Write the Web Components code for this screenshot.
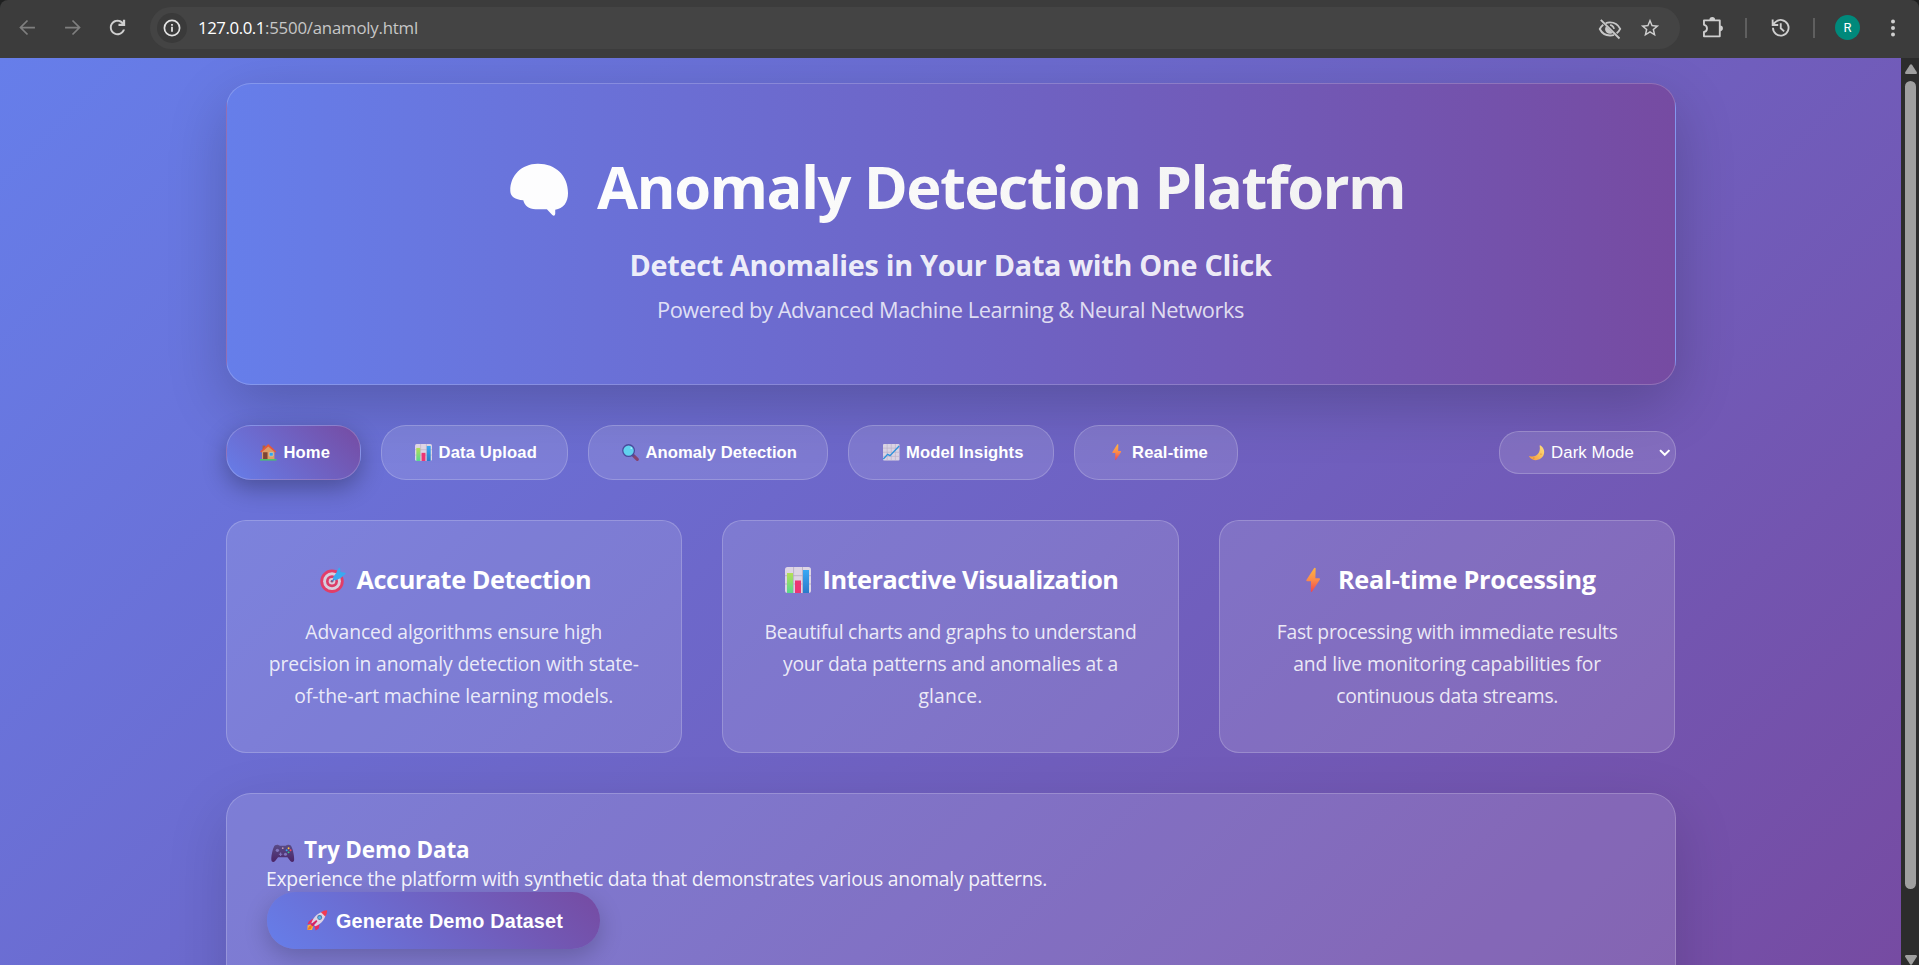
<!DOCTYPE html>
<html lang="en">
<head>
<meta charset="utf-8">
<title>Anomaly Detection Platform</title>
<style>
html,body{margin:0;height:100%;overflow:hidden;background:#1f2020}
body{font-family:"Open Sans","Noto Sans",sans-serif;color:#fff}
</style>
</head>
<body>
<app-window></app-window>
<script>
const ICONS = {
  brain:`<svg viewBox="0 0 60 54"><path fill="#fdfdfe" d="M0.3 28C0 12 12 .5 28 .3C46 0 59 12 59 30C59 40 54 46 46 47V51.500Q45.500 54 43 52.500L37.500 46.700H26C19 46.500 15 43 13.500 37.500C5 36.500 .5 34 .3 28Z"/></svg>`,
  home:`<svg viewBox="0 0 16 16"><path fill="#b5603a" d="M2.500 1.500h2.600v5H2.500z"/><path fill="#dd9d66" d="M2 7l6-5.200L14 7v8H2z"/><path fill="#e8573a" d="M8 0l7.800 7.200-1 1.100L8 2.400 1.200 8.300.2 7.200z"/><path fill="#7c4534" d="M3 8h4.300v7H3z"/><path fill="#2da6ef" stroke="#f3d6b8" stroke-width=".5" d="M9 8.200h3.800v3.500H9z"/><path fill="#45cf62" d="M0 14.700h16V16H0z"/></svg>`,
  chart:`<svg viewBox="0 0 26 26"><defs><linearGradient id="g" x2="0" y2="1"><stop stop-color="#b5df55"/><stop offset="1" stop-color="#56d891"/></linearGradient><linearGradient id="b" x2="0" y2="1"><stop stop-color="#39a9f5"/><stop offset="1" stop-color="#2b79c9"/></linearGradient></defs><rect width="26" height="26" rx="2.500" fill="#ddd5e4"/><path stroke="#b4a9c2" stroke-width=".8" d="M0 8.700h26M0 17h26M8.600 0v26M17.500 0v26"/><path fill="url(#g)" d="M2 6h6v20H2z"/><path fill="#ec3574" d="M10 13.500h6V26h-6z"/><path fill="url(#b)" d="M18 3h6v23h-6z"/></svg>`,
  search:`<svg viewBox="0 0 16 16"><path stroke="#86436f" stroke-width="3" stroke-linecap="round" d="M10.800 11l3.600 3.500"/><path stroke="#554a92" stroke-width="2" d="M9.500 9.700l1.800 1.800"/><circle cx="6.200" cy="6.200" r="5.500" fill="#61d2ee" stroke="#4a4a9c" stroke-width="1.200"/><circle cx="8.700" cy="3.800" r=".8" fill="#b4f0ff"/></svg>`,
  trend:`<svg viewBox="0 0 16 16"><rect width="16" height="16" rx="1" fill="#dad3e3"/><path stroke="#b9afc6" stroke-width=".6" d="M0 4h16M0 8h16M0 12h16M4 0v16M8 0v16M12 0v16"/><path fill="none" stroke="#2d92dc" stroke-width="1.300" d="M.3 14.500L4.500 10l2.300 1.300L15.700 2"/></svg>`,
  bolt:`<svg viewBox="0 0 15 26"><defs><linearGradient id="o" x2="0" y2="1"><stop stop-color="#ffb63e"/><stop offset=".5" stop-color="#fc8b4a"/><stop offset="1" stop-color="#f0434f"/></linearGradient></defs><path fill="url(#o)" d="M8.500.5L.4 13Q0 14.300 1.300 14.300H5.200L5 25Q5.500 26 6.300 25L14.400 12.500Q14.800 11.200 13.500 11.200H9.700L10 .8Q9.300-.2 8.500.5z"/></svg>`,
  moon:`<svg viewBox="0 0 16 16"><defs><linearGradient id="m" x1="1" x2="0" y2="1"><stop stop-color="#ffe27c"/><stop offset="1" stop-color="#f5983c"/></linearGradient></defs><path fill="url(#m)" d="M11.800.4C16 3 17 8.500 13.800 12.500 10.300 16.800 3.500 16.700.2 12.200Q0 11.200 1.100 11.500C7.500 13 12.300 8 11 1 10.900.3 11.300.1 11.800.4z"/><circle cx="5" cy="13.500" r=".8" fill="#e68a3a"/><circle cx="12.300" cy="9.500" r=".9" fill="#eda847"/></svg>`,
  target:`<svg viewBox="0 0 26 26"><circle cx="12" cy="14.200" r="11.700" fill="#e23d68"/><circle cx="12" cy="14.200" r="8.900" fill="#d8cede"/><circle cx="12" cy="14.200" r="6" fill="#dd3c68"/><circle cx="12" cy="14.200" r="3.300" fill="#d8cede"/><circle cx="12" cy="14.200" r="1.300" fill="#a24b76"/><path stroke="#3c88c9" stroke-width="1.300" d="M12 14.200L21 5"/><path fill="#39aaf0" d="M12.700 10.800L16 6.200 18.800.8Q20 .2 20.200 1.800L20.500 5 25.300 5.700Q26.300 6.400 25.200 7.300L20.500 11.300 15 13.600z"/></svg>`,
  pad:`<svg viewBox="0 0 24 19"><defs><linearGradient id="p" x2="0" y2="1"><stop stop-color="#584a86"/><stop offset="1" stop-color="#4b2467"/></linearGradient></defs><path fill="#6b355f" d="M4.500 1.500Q6-.2 9 1.500zM15 1.500Q18-.2 19.500 1.500z"/><path fill="url(#p)" d="M4 1.300Q7 .8 9 1.700H15Q17.500.8 20 1.300C22 3 24 12 23.700 16.500 23.400 19 21.200 19 19.800 17.500L16.800 13.700H7.200L4.200 17.500C2.800 19 .6 19 .3 16.500 0 12 2 3 4 1.300z"/><circle cx="6.500" cy="6.500" r="1.700" fill="#8275bd"/><circle cx="14.800" cy="10.500" r="1.600" fill="#8275bd"/><path stroke="#8275bd" stroke-width="1.100" d="M8 10.500h3.600M9.800 8.700v3.600"/><circle cx="12" cy="4.300" r=".9" fill="#b899b5"/><circle cx="18" cy="4.400" r="1" fill="#ffca3f"/><circle cx="20" cy="6.500" r="1" fill="#f44a59"/><circle cx="16" cy="6.500" r="1" fill="#30a7f1"/><circle cx="18" cy="8.600" r="1" fill="#34cf82"/></svg>`,
  rocket:`<svg viewBox="0 0 21 21"><path fill="#ffb13d" d="M.5 20.500V16L4 14.500 6.500 17 5 20.500z"/><path fill="#f5781f" d="M.5 20.500L2 17l2-1 1 1.200L4 19.500z"/><path fill="#e82c62" d="M7 8.500L2 11.500.5 14.500l5-1zM13 14l-1 5-3.200 2-1.300-5z"/><path fill="#ddd3e6" d="M4.500 13C7 6.500 11 2.500 19.800.7 19 9.500 15 14 8.500 16.700z"/><path fill="#f03a52" d="M14.300 2.400Q17 .5 20 .3 20.800.2 20.700 1 20.500 4.500 18.700 6.700z"/><circle cx="13" cy="7.700" r="2.500" fill="#4b74a8"/><circle cx="13" cy="7.700" r="1.600" fill="#55b8ea"/><path fill="#d62361" d="M9.500 10.300l1.200 1.200L6 17l-2.500-2z"/></svg>`,
  back:`<svg viewBox="0 0 24 24" fill="none" stroke="#7f7f7f" stroke-width="2"><path d="M20.500 12H5M12 4L4 12l8 8"/></svg>`,
  forward:`<svg viewBox="0 0 24 24" fill="none" stroke="#7f7f7f" stroke-width="2"><path d="M3.500 12h15.500M12 4l8 8-8 8"/></svg>`,
  reload:`<svg viewBox="0 0 24 24" fill="#cfcfcf"><path d="M17.650 6.350C16.200 4.900 14.210 4 12 4c-4.420 0-7.990 3.580-7.990 8s3.570 8 7.990 8c3.730 0 6.840-2.550 7.730-6h-2.080c-.82 2.330-3.040 4-5.650 4-3.310 0-6-2.690-6-6s2.690-6 6-6c1.660 0 3.140.69 4.220 1.780L16 8h-3v2.500h7V4h-2.350z"/></svg>`,
  info:`<svg viewBox="0 0 18 18"><circle cx="9" cy="9" r="7.600" fill="none" stroke="#e3e3e3" stroke-width="1.700"/><path fill="#e3e3e3" d="M8.100 7.800h1.800v5H8.100zM8.100 4.900h1.800v1.800H8.100z"/></svg>`,
  eye:`<svg viewBox="0 0 24 24" fill="none" stroke="#c7c7c7" stroke-width="1.900"><path d="M7.800 6.200A11 11 0 0 1 12 5.400c4.500 0 8.200 2.500 10.200 6.500a11 11 0 0 1-3.600 4.300M16 17.800a11 11 0 0 1-4 .7c-4.500 0-8.200-2.500-10.200-6.500A11.500 11.500 0 0 1 5.300 7.700M2.800 2.800l18.700 18.700"/><path d="M12 8a4 4 0 0 1 4 4M8.200 10.500a4 4 0 0 0 5.300 5.200z" fill="#c7c7c7" stroke-width="1.500"/></svg>`,
  star:`<svg viewBox="0 0 24 24" fill="#cfcfcf"><path d="M22 9.240l-7.190-.62L12 2 9.190 8.630 2 9.240l5.460 4.730L5.820 21 12 17.270 18.180 21l-1.630-7.030L22 9.240zM12 15.400l-3.760 2.270 1-4.280-3.320-2.880 4.380-.38L12 6.100l1.710 4.040 4.380.38-3.320 2.880 1 4.280L12 15.400z"/></svg>`,
  puzzle:`<svg viewBox="0 0 22 22"><path fill="none" stroke="#cfcfcf" stroke-width="1.900" stroke-linejoin="round" d="M2 3.500H18.200V19.800H2V15.300A3.700 3.700 0 0 0 2 8z"/><path fill="#cfcfcf" d="M7.600 3a2.900 2.900 0 0 1 5.800 0zM18.500 8.700a2.900 2.900 0 0 1 0 5.800z"/></svg>`,
  history:`<svg viewBox="0 0 20 20" fill="none" stroke="#cfcfcf" stroke-width="1.900"><path d="M2 10a8 8 0 1 0 2.500-5.800L1.800 6.900M1.700 1.500v5.700h5.700M10 5.300V10.500l3.500 3.200"/></svg>`,
  dots:`<svg viewBox="0 0 4 18" fill="#cfcfcf"><circle cx="2" cy="2.400" r="2"/><circle cx="2" cy="9" r="2"/><circle cx="2" cy="15.600" r="2"/></svg>`,
  chevron:`<svg viewBox="0 0 12 8" fill="none" stroke="#fff" stroke-width="2.200"><path d="M1 1.200l5 5 5-5"/></svg>`
};

function define(name, css, html, setup){
  const tpl = document.createElement('template');
  tpl.innerHTML = `<style>*{box-sizing:border-box}:host{box-sizing:border-box}${css}</style>${html}`;
  customElements.define(name, class extends HTMLElement{
    connectedCallback(){
      if(this.shadowRoot) return;
      this.attachShadow({mode:'open'}).append(tpl.content.cloneNode(true));
      if(setup) setup(this, this.shadowRoot);
    }
  });
}

/* Icon: name, w, h */
define('ui-icon', ':host{display:block;flex:none}span{display:block;width:100%;height:100%}svg{display:block;width:100%;height:100%;overflow:visible}', '<span></span>', (el, root) => {
  root.querySelector('span').innerHTML = ICONS[el.getAttribute('name')];
  el.style.width = el.getAttribute('w') + 'px';
  el.style.height = el.getAttribute('h') + 'px';
});

/* One line of text tracked to an exact measure */
define('fit-line', ':host{display:block;white-space:nowrap;flex:none}span{display:inline-block;white-space:pre}', '<span></span>', (el, root) => {
  const span = root.querySelector('span');
  span.textContent = el.getAttribute('text');
  const want = +el.getAttribute('w');
  const n = span.textContent.length;
  span.style.letterSpacing = ((want - span.getBoundingClientRect().width) / n) + 'px';
});

define('browser-bar', `
:host{display:flex;align-items:center;height:58px;background:#3c3c3c;border-radius:8px 8px 0 0;padding:0 0 3px 17px}
.omni{display:flex;align-items:center;height:42px;width:1530px;margin-left:23px;border-radius:21px;background:#444;padding:0 19px 0 7px;flex:none}
.info{width:30px;height:30px;border-radius:50%;background:#3a3a3a;display:grid;place-items:center;margin-right:11px}
.url{display:flex;font-size:16.800px;line-height:28px;color:#c7c7c7;flex:1}
.url .h{color:#fff}
.sep{width:2px;height:20px;background:#5f5f5f;flex:none}
.av{width:25px;height:25px;border-radius:50%;background:#00897b;color:#fff;font:13px/25px Roboto,sans-serif;text-align:center;flex:none}
`, `
<ui-icon name="back" w="21" h="21"></ui-icon>
<ui-icon name="forward" w="21" h="21" style="margin-left:24px"></ui-icon>
<ui-icon name="reload" w="23" h="23" style="margin-left:23px;margin-right:-2px"></ui-icon>
<div class="omni"><div class="info"><ui-icon name="info" w="18" h="18"></ui-icon></div>
<div class="url"><fit-line class="h" text="127.0.0.1" w="67"></fit-line><fit-line text=":5500/anamoly.html" w="153"></fit-line></div>
<ui-icon name="eye" w="24" h="24" style="margin:2px 17px 0 0"></ui-icon><ui-icon name="star" w="22" h="22"></ui-icon></div>
<ui-icon name="puzzle" w="21.500" h="21.500" style="margin-left:22px"></ui-icon>
<i class="sep" style="margin-left:21.500px"></i>
<ui-icon name="history" w="19.500" h="19.500" style="margin-left:23.500px;margin-top:1px"></ui-icon>
<i class="sep" style="margin-left:23px"></i>
<div class="av" style="margin-left:20px">R</div>
<ui-icon name="dots" w="4" h="18" style="margin-left:30.500px"></ui-icon>`);

define('scroll-track', `
:host{display:flex;flex-direction:column;align-items:center;width:18px;background:#2c2c2c;padding:6px 0 0 1px;flex:none}
svg{display:block;width:12px;height:10px;flex:none}
.thumb{width:11px;height:808px;border-radius:5.500px;background:#9f9f9f;margin-top:7px;flex:none}
.down{margin-top:66px}
`, `<svg viewBox="0 0 12 10"><path fill="#9f9f9f" d="M5 .8Q6-.4 7 .8L12 8.500Q12 10 11 10H1Q0 10 0 8.500z"/></svg><div class="thumb"></div><svg class="down" viewBox="0 0 12 10"><path fill="#9f9f9f" d="M5 9.200Q6 10.400 7 9.200L12 1.500Q12 0 11 0H1Q0 0 0 1.500z"/></svg>`);

define('hero-banner', `
:host{display:flex;flex-direction:column;align-items:center;height:302px;padding-top:62px;border:1px solid rgba(255,255,255,.2);border-radius:25px;background:linear-gradient(90deg,#667eea,#764ba2);box-shadow:0 20px 60px rgba(0,0,0,.2)}
.t{display:flex;height:80px}
.t ui-icon{margin:16.500px 28px 0 14px}
.t fit-line{font-weight:700;font-size:59.700px;line-height:80px;background:linear-gradient(90deg,#fdfdfd,#f2f2f2);-webkit-background-clip:text;background-clip:text;color:transparent}
.s{font-weight:700;font-size:28.800px;line-height:40px;margin-top:18.500px;color:rgba(255,255,255,.9)}
.p{font-size:21.800px;line-height:30px;margin-top:10px;color:rgba(255,255,255,.8)}
`, `<div class="t"><ui-icon name="brain" w="59" h="54"></ui-icon><fit-line text="Anomaly Detection Platform" w="808"></fit-line></div>
<fit-line class="s" text="Detect Anomalies in Your Data with One Click" w="642"></fit-line>
<fit-line class="p" text="Powered by Advanced Machine Learning &amp; Neural Networks" w="587"></fit-line>`);

define('nav-pill', `
:host{display:flex;align-items:center;height:55px;border:1px solid rgba(255,255,255,.2);border-radius:25px;background:rgba(255,255,255,.12);padding-left:30px;font:700 16.600px/24px "Liberation Sans",Arial,sans-serif}
:host([active]){background:linear-gradient(45deg,#667eea,#764ba2);box-shadow:0 8px 25px rgba(0,0,0,.3)}
.i{width:27px;padding-left:3.500px;flex:none}
`, `<div class="i"><slot name="icon"></slot></div><slot></slot>`, el => { el.style.width = el.getAttribute('w') + 'px'; });

define('theme-select', `
:host{display:flex;align-items:center;width:177px;height:43px;margin-left:auto;border:1px solid rgba(255,255,255,.2);border-radius:20px;background:rgba(255,255,255,.12);padding:0 4px 0 29px;font:16.800px/24px "Liberation Sans",Arial,sans-serif}
`, `<ui-icon name="moon" w="15.500" h="15.500" style="margin-right:7px"></ui-icon><fit-line text="Dark Mode" w="83"></fit-line><ui-icon name="chevron" w="11.500" h="7.500" style="margin-left:auto"></ui-icon>`);

define('nav-row', `:host{display:flex;align-items:center;gap:20px;height:55px}`, `
<nav-pill active w="135"><ui-icon slot="icon" name="home" w="16.500" h="16.500"></ui-icon><fit-line text="Home" w="46.500"></fit-line></nav-pill>
<nav-pill w="187"><ui-icon slot="icon" name="chart" w="17" h="17"></ui-icon><fit-line text="Data Upload" w="98.500"></fit-line></nav-pill>
<nav-pill w="240.500"><ui-icon slot="icon" name="search" w="17" h="17"></ui-icon><fit-line text="Anomaly Detection" w="151.500"></fit-line></nav-pill>
<nav-pill w="206"><ui-icon slot="icon" name="trend" w="16.500" h="16.500"></ui-icon><fit-line text="Model Insights" w="117.500"></fit-line></nav-pill>
<nav-pill w="164"><ui-icon slot="icon" name="bolt" w="9.500" h="16.500" style="margin-left:3px"></ui-icon><fit-line text="Real-time" w="76"></fit-line></nav-pill>
<theme-select></theme-select>`);

define('feature-card', `
:host{display:flex;flex-direction:column;align-items:center;height:233px;border:1px solid rgba(255,255,255,.2);border-radius:20px;background:rgba(255,255,255,.12);padding-top:39.500px}
.h{display:flex;height:36px;margin-bottom:19.500px;font-weight:700;font-size:25.300px;line-height:36px}
.b{font-size:19.300px;line-height:32px;color:rgba(255,255,255,.86);display:flex;flex-direction:column;align-items:center}
`, `<div class="h"><slot name="head"></slot></div><div class="b"><slot></slot></div>`);

define('feature-grid', `:host{display:grid;grid-template-columns:repeat(3,1fr);gap:40px}
ui-icon{margin:6.500px 11px 0 3px}`, `
<feature-card><ui-icon slot="head" name="target" w="26" h="26"></ui-icon><fit-line slot="head" text="Accurate Detection" w="234.500"></fit-line>
<fit-line text="Advanced algorithms ensure high" w="297"></fit-line><fit-line text="precision in anomaly detection with state-" w="370"></fit-line><fit-line text="of-the-art machine learning models." w="319"></fit-line></feature-card>
<feature-card><ui-icon slot="head" name="chart" w="26" h="26"></ui-icon><fit-line slot="head" text="Interactive Visualization" w="296"></fit-line>
<fit-line text="Beautiful charts and graphs to understand" w="372"></fit-line><fit-line text="your data patterns and anomalies at a" w="335"></fit-line><fit-line text="glance." w="64"></fit-line></feature-card>
<feature-card><ui-icon slot="head" name="bolt" w="14.500" h="26" style="margin:6px 17px 0 8px"></ui-icon><fit-line slot="head" text="Real-time Processing" w="258"></fit-line>
<fit-line text="Fast processing with immediate results" w="341"></fit-line><fit-line text="and live monitoring capabilities for" w="308"></fit-line><fit-line text="continuous data streams." w="222"></fit-line></feature-card>`);

define('demo-panel', `
:host{display:block;height:260px;border:1px solid rgba(255,255,255,.2);border-radius:25px;background:rgba(255,255,255,.12);box-shadow:0 20px 60px rgba(0,0,0,.15);padding:41px 40px}
.h{display:flex;height:30px;font-weight:700;font-size:22.500px;line-height:30px}
.h ui-icon{margin:9px 9.500px 0 4.500px}
.p{font-size:19.300px;line-height:27px;color:rgba(255,255,255,.92);margin-left:-.5px}
.btn{display:flex;align-items:center;width:333.500px;height:57px;border-radius:28px;background:linear-gradient(45deg,#667eea,#764ba2);box-shadow:0 8px 25px rgba(0,0,0,.2);padding-left:40.500px;font:700 19.800px/28px "Liberation Sans",Arial,sans-serif}
`, `<div class="h"><ui-icon name="pad" w="23.500" h="18.500"></ui-icon><fit-line text="Try Demo Data" w="165.500"></fit-line></div>
<fit-line class="p" text="Experience the platform with synthetic data that demonstrates various anomaly patterns." w="781"></fit-line>
<div class="btn"><ui-icon name="rocket" w="20.500" h="20.500" style="margin-right:8.500px"></ui-icon><fit-line text="Generate Demo Dataset" w="227"></fit-line></div>`);

define('app-window', `
:host{display:flex;flex-direction:column;width:1919px;height:965px;overflow:hidden}
.view{display:flex;height:907px;overflow:hidden}
.page{width:1901px;height:907px;overflow:hidden;background:linear-gradient(135deg,#667eea,#764ba2);padding:25px 225.500px 0;display:flex;flex-direction:column;gap:40px}
.page>*{flex:none}
`, `<browser-bar></browser-bar><div class="view"><div class="page"><hero-banner></hero-banner><nav-row></nav-row><feature-grid></feature-grid><demo-panel></demo-panel></div><scroll-track></scroll-track></div>`);
</script>
</body>
</html>
